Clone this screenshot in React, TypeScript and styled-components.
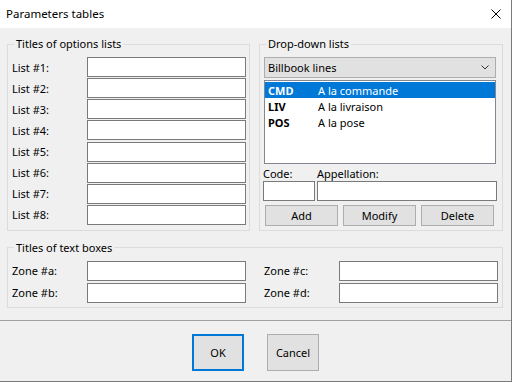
import { Fragment } from "react";
import styled, { createGlobalStyle } from "styled-components";

const GlobalStyle = createGlobalStyle`
  html, body {
    margin: 0;
    padding: 0;
    background: #ffffff;
  }
  body {
    font-family: "Noto Sans", "Liberation Sans", sans-serif;
    font-size: 11px;
    color: #000000;
  }
  * {
    box-sizing: border-box;
  }
`;

const optionLists = ["#1", "#2", "#3", "#4", "#5", "#6", "#7", "#8"];

const billbookLines = [
  { code: "CMD", label: "A la commande", selected: true },
  { code: "LIV", label: "A la livraison", selected: false },
  { code: "POS", label: "A la pose", selected: false },
];

const Window = styled.div`
  width: 512px;
  height: 382px;
  display: flex;
  flex-direction: column;
  background: #f0f0f0;
  border-right: 1px solid #7a7a7a;
  border-bottom: 1px solid #7a7a7a;
`;

const TitleBar = styled.div`
  height: 28px;
  display: flex;
  align-items: center;
  justify-content: space-between;
  padding: 0 10px 1px 6px;
  background: #ffffff;
`;

const Title = styled.span`
  font-size: 11.5px;
`;

const CloseIcon = styled.svg`
  width: 10px;
  height: 10px;
  margin-top: 1px;
`;

const Body = styled.div`
  padding: 8px 8px 12px 7px;
  display: flex;
  flex-direction: column;
  gap: 9px;
`;

const Columns = styled.div`
  display: grid;
  grid-template-columns: 243px 244px;
  column-gap: 9px;
  align-items: stretch;
`;

// fieldset draws the border around the legend like a Win32 group box
const Group = styled.fieldset<{ $padRight?: number; $padBottom?: number }>`
  margin: 0;
  min-width: 0;
  border: 1px solid #dcdcdc;
  padding: 5px ${(p) => p.$padRight ?? 3}px ${(p) => p.$padBottom ?? 3}px 4px;
`;

const Legend = styled.legend`
  margin-left: 2px;
  padding: 0 2px;
  line-height: 16px;
`;

const FieldGrid = styled.div<{ $rowGap: number }>`
  display: grid;
  grid-template-columns: 75px 159px;
  grid-auto-rows: 20px;
  row-gap: ${(p) => p.$rowGap}px;
  align-items: center;
`;

const TextBox = styled.div`
  height: 20px;
  background: #ffffff;
  border: 1px solid #7a7a7a;
`;

const DropDown = styled.div`
  height: 21px;
  display: flex;
  align-items: center;
  justify-content: space-between;
  padding: 0 6px 0 3px;
  background: #e1e1e1;
  border: 1px solid #adadad;
`;

const Chevron = styled.svg`
  width: 8px;
  height: 5px;
`;

const DropColumn = styled.div`
  display: flex;
  flex-direction: column;
`;

const ListBox = styled.div`
  margin-top: 2px;
  height: 84px;
  padding: 1px 0;
  background: #ffffff;
  border: 1px solid #828790;
`;

const ListRow = styled.div<{ $selected: boolean }>`
  height: 16px;
  display: grid;
  grid-template-columns: 50px 1fr;
  align-items: center;
  padding-left: 3px;
  background: ${(p) => (p.$selected ? "#0078d7" : "transparent")};
  color: ${(p) => (p.$selected ? "#ffffff" : "#000000")};
`;

const Code = styled.span`
  font-weight: bold;
`;

const EditGrid = styled.div`
  margin: 0 -1px;
  display: grid;
  grid-template-columns: 52px 1fr;
  grid-template-rows: 17px 20px;
  column-gap: 2px;
`;

const SmallLabel = styled.span`
  align-self: end;
  line-height: 14px;
`;

const ActionRow = styled.div`
  margin: 4px 0 0 1px;
  display: grid;
  grid-template-columns: repeat(3, 73px);
  column-gap: 5px;
`;

const PushButton = styled.button<{ $default?: boolean }>`
  font: inherit;
  color: #000000;
  padding: 0;
  background: #e1e1e1;
  border: ${(p) => (p.$default ? "2px solid #0078d7" : "1px solid #adadad")};
  height: 21px;
`;

const ZoneColumns = styled.div`
  display: grid;
  grid-template-columns: 234px 234px;
  column-gap: 18px;
`;

const Footer = styled.div`
  flex: 1;
  display: flex;
  justify-content: center;
  gap: 23px;
  padding-top: 13px;
  border-top: 1px solid #a0a0a0;
`;

const DialogButton = styled(PushButton)`
  width: 52px;
  height: 37px;
`;

const App = () => {
  return (
    <>
      <GlobalStyle />
      <Window>
        <TitleBar>
          <Title>Parameters tables</Title>
          <CloseIcon viewBox="0 0 10 10">
            <path d="M0.5 0.5 L9.5 9.5 M9.5 0.5 L0.5 9.5" stroke="#000" strokeWidth="1" fill="none" />
          </CloseIcon>
        </TitleBar>

        <Body>
          <Columns>
            {/* Titles of options lists */}
            <Group $padBottom={5}>
              <Legend>Titles of options lists</Legend>
              <FieldGrid $rowGap={1.15}>
                {optionLists.map((n) => (
                  <Fragment key={n}>
                    <span>List {n}:</span>
                    <TextBox />
                  </Fragment>
                ))}
              </FieldGrid>
            </Group>

            {/* Drop-down lists */}
            <Group $padRight={6}>
              <Legend>Drop-down lists</Legend>
              <DropColumn>
                <DropDown>
                  <span>Billbook lines</span>
                  <Chevron viewBox="0 0 8 5">
                    <path d="M0.5 0.5 L4 4 L7.5 0.5" stroke="#333" strokeWidth="1" fill="none" />
                  </Chevron>
                </DropDown>
                <ListBox>
                  {billbookLines.map((line) => (
                    <ListRow key={line.code} $selected={line.selected}>
                      <Code>{line.code}</Code>
                      <span>{line.label}</span>
                    </ListRow>
                  ))}
                </ListBox>
                <EditGrid>
                  <SmallLabel>Code:</SmallLabel>
                  <SmallLabel>Appellation:</SmallLabel>
                  <TextBox />
                  <TextBox />
                </EditGrid>
                <ActionRow>
                  <PushButton>Add</PushButton>
                  <PushButton>Modify</PushButton>
                  <PushButton>Delete</PushButton>
                </ActionRow>
              </DropColumn>
            </Group>
          </Columns>

          {/* Titles of text boxes */}
          <Group $padRight={4} $padBottom={4}>
            <Legend>Titles of text boxes</Legend>
            <ZoneColumns>
              <FieldGrid $rowGap={2}>
                <span>Zone #a:</span>
                <TextBox />
                <span>Zone #b:</span>
                <TextBox />
              </FieldGrid>
              <FieldGrid $rowGap={2}>
                <span>Zone #c:</span>
                <TextBox />
                <span>Zone #d:</span>
                <TextBox />
              </FieldGrid>
            </ZoneColumns>
          </Group>
        </Body>

        <Footer>
          <DialogButton $default>OK</DialogButton>
          <DialogButton>Cancel</DialogButton>
        </Footer>
      </Window>
    </>
  );
};

export default App;
